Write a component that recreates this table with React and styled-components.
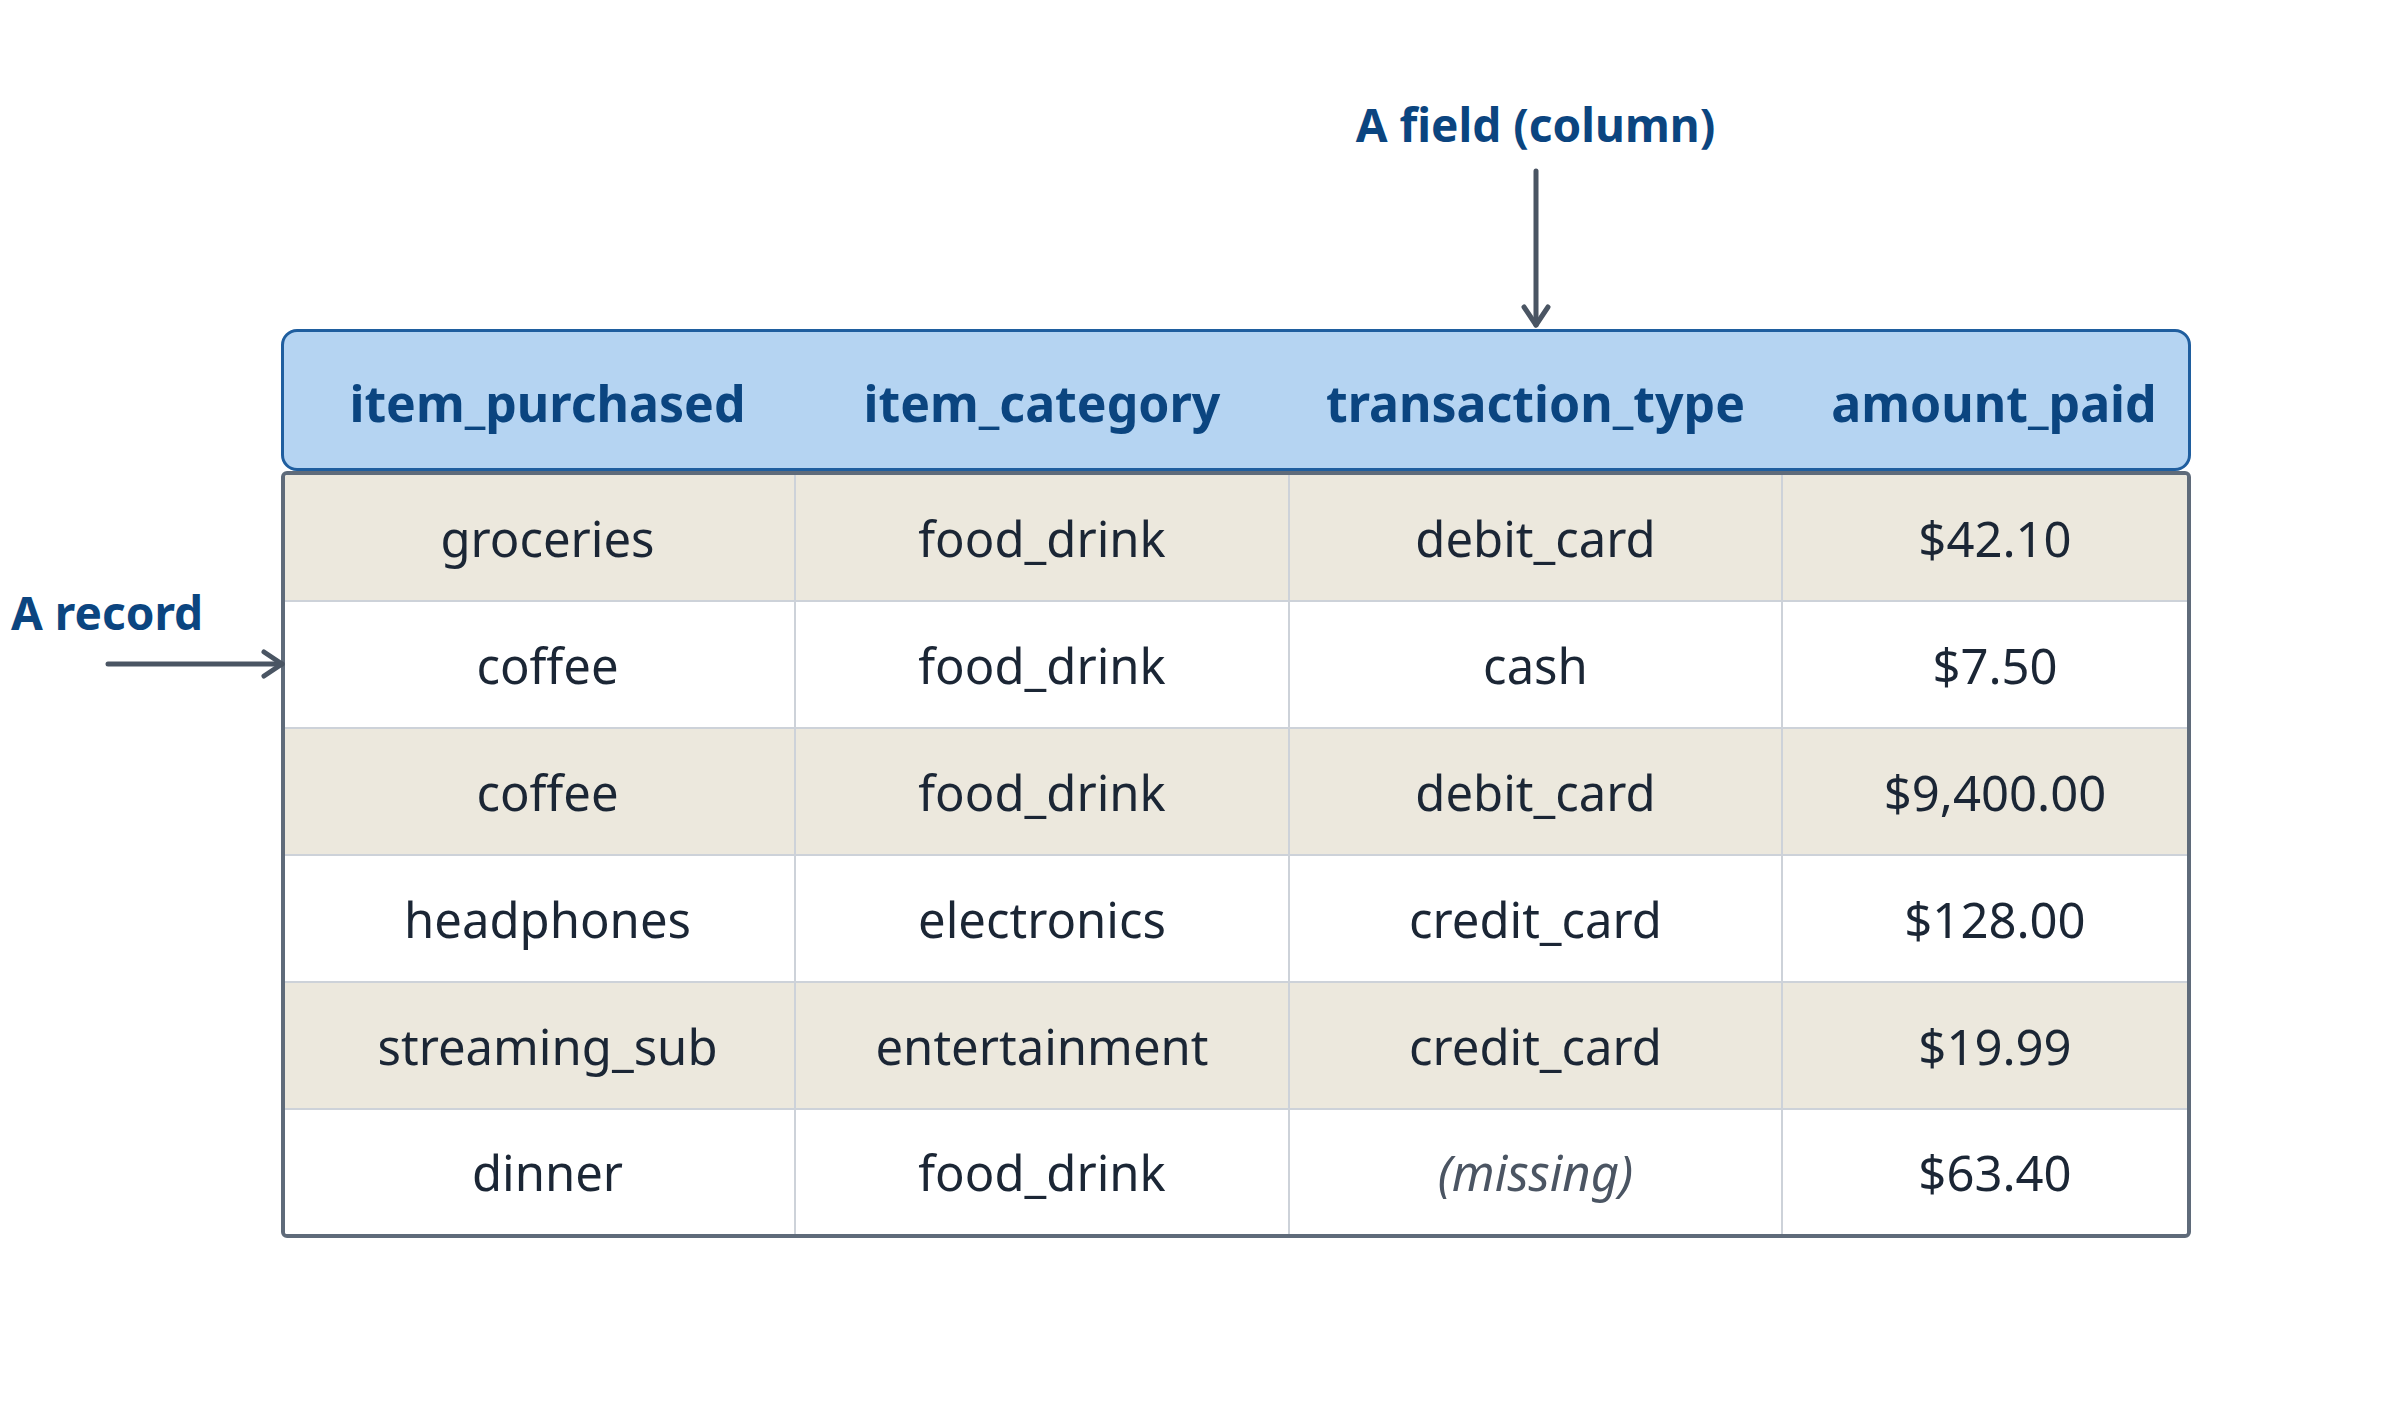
import React from 'react';
import styled, { createGlobalStyle } from 'styled-components';

const GlobalStyle = createGlobalStyle`
  html, body {
    margin: 0;
    padding: 0;
    background: #ffffff;
  }
  body {
    font-family: "Noto Sans", "Open Sans", sans-serif;
  }
`;

// widths include the 2px divider at the right of each body cell
const columns = [
  { key: 'item_purchased', width: 511, shift: 16 },
  { key: 'item_category', width: 494, shift: 0 },
  { key: 'transaction_type', width: 493, shift: 0 },
  { key: 'amount_paid', width: 406, shift: 18 },
];

const template = columns.map((c) => `${c.width}px`).join(' ');

const rows = [
  ['groceries', 'food_drink', 'debit_card', '$42.10'],
  ['coffee', 'food_drink', 'cash', '$7.50'],
  ['coffee', 'food_drink', 'debit_card', '$9,400.00'],
  ['headphones', 'electronics', 'credit_card', '$128.00'],
  ['streaming_sub', 'entertainment', 'credit_card', '$19.99'],
  ['dinner', 'food_drink', null, '$63.40'],
];

const Canvas = styled.div`
  display: grid;
  grid-template-columns: 281px 1910px;
  padding-top: 92px;
  width: 2400px;
  height: 1412px;
  box-sizing: border-box;
  align-content: start;
`;

const FieldNote = styled.div`
  grid-column: 2;
  display: grid;
  grid-template-columns: ${template};
  padding: 0 3px;
`;

const FieldNoteSlot = styled.div`
  grid-column: 3;
  display: flex;
  flex-direction: column;
  align-items: center;
`;

const NoteLabel = styled.div`
  font-size: 46px;
  line-height: 64px;
  font-weight: 700;
  color: #0b4580;
  white-space: nowrap;
`;

const DownArrowSvg = styled.svg`
  display: block;
  margin-top: 13px;
  overflow: visible;
`;

const RecordNote = styled.div`
  grid-column: 1;
  padding-top: 251px;
  padding-left: 11px;
`;

const RightArrowSvg = styled.svg`
  display: block;
  margin-top: 6px;
  margin-left: 95px;
  overflow: visible;
  position: relative;
  z-index: 1;
`;

const Table = styled.div`
  grid-column: 2;
  display: flex;
  flex-direction: column;
`;

const HeaderRow = styled.div`
  display: grid;
  grid-template-columns: ${template};
  height: 142px;
  box-sizing: border-box;
  border: 3px solid #1f5e9f;
  border-radius: 16px;
  background: #b5d4f2;
`;

const HeaderCell = styled.div`
  display: flex;
  align-items: center;
  justify-content: center;
  padding-left: ${(p) => p.$shift}px;
  padding-top: 5px;
  font-size: 50px;
  font-weight: 700;
  color: #0b4580;
  white-space: nowrap;
`;

const Body = styled.div`
  border: 4px solid #5f6b7a;
  border-radius: 6px;
  overflow: hidden;
`;

const BodyRow = styled.div`
  display: grid;
  grid-template-columns: ${template};
  height: 127px;
  box-sizing: border-box;
  background: ${(p) => (p.$striped ? '#ece8dd' : '#ffffff')};
  border-bottom: 2px solid #cdd2d9;

  &:last-child {
    height: 124px;
    border-bottom: none;
  }
`;

const BodyCell = styled.div`
  display: flex;
  align-items: center;
  justify-content: center;
  padding-left: ${(p) => p.$shift}px;
  border-right: 2px solid #cdd2d9;
  font-size: 49px;
  font-style: ${(p) => (p.$missing ? 'italic' : 'normal')};
  color: ${(p) => (p.$missing ? '#4b5563' : '#1b2635')};
  white-space: nowrap;

  &:last-child {
    border-right: none;
  }
`;

const DownArrow = () => (
  <DownArrowSvg width="40" height="160" viewBox="0 0 40 160">
    <g stroke="#4a5563" strokeWidth="5" strokeLinecap="round" fill="none">
      <line x1="20" y1="2" x2="20" y2="156" />
      <polyline points="8,138 20,156 32,138" strokeLinejoin="round" />
    </g>
  </DownArrowSvg>
);

const RightArrow = () => (
  <RightArrowSvg width="180" height="28" viewBox="0 0 180 28">
    <g stroke="#4a5563" strokeWidth="5" strokeLinecap="round" fill="none">
      <line x1="2" y1="14" x2="176" y2="14" />
      <polyline points="158,2 176,14 158,26" strokeLinejoin="round" />
    </g>
  </RightArrowSvg>
);

const App = () => {
  return (
    <>
      <GlobalStyle />
      <Canvas>
        <FieldNote>
          <FieldNoteSlot>
            <NoteLabel>A field (column)</NoteLabel>
            <DownArrow />
          </FieldNoteSlot>
        </FieldNote>

        <RecordNote>
          <NoteLabel>A record</NoteLabel>
          <RightArrow />
        </RecordNote>

        <Table>
          <HeaderRow>
            {columns.map((c) => (
              <HeaderCell key={c.key} $shift={c.shift}>
                {c.key}
              </HeaderCell>
            ))}
          </HeaderRow>
          <Body>
            {rows.map((row, i) => (
              <BodyRow key={i} $striped={i % 2 === 0}>
                {row.map((value, j) => (
                  <BodyCell
                    key={j}
                    $shift={columns[j].shift}
                    $missing={value === null}
                  >
                    {value === null ? '(missing)' : value}
                  </BodyCell>
                ))}
              </BodyRow>
            ))}
          </Body>
        </Table>
      </Canvas>
    </>
  );
};

export default App;
